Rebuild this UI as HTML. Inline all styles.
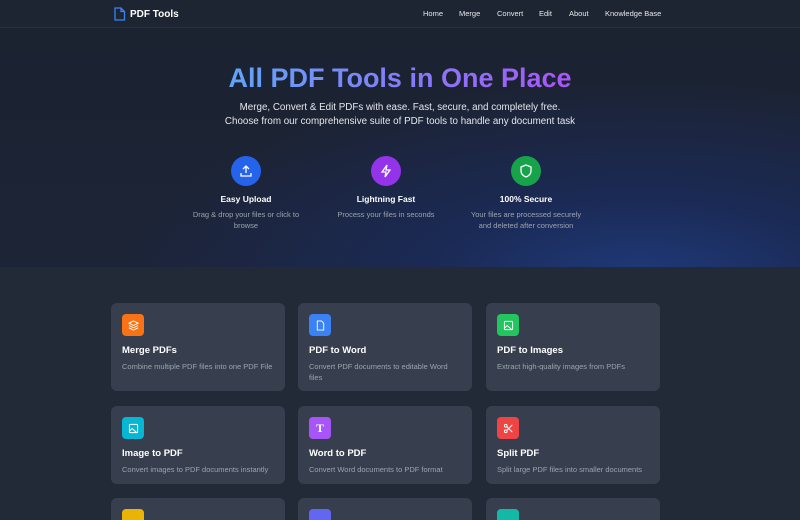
<!DOCTYPE html>
<html><head><meta charset="utf-8"><style>
*{margin:0;padding:0;box-sizing:border-box}
html,body{width:800px;height:520px;overflow:hidden}
body{background:#222a38;font-family:"Liberation Sans",sans-serif;color:#fff;position:relative}
nav{height:28px;background:#1e2532;border-bottom:1px solid #2a3242;position:relative}
.logo{position:absolute;left:113px;top:7px;display:flex;align-items:center;gap:4px;font-weight:bold;font-size:10px}
.links{position:absolute;top:9px;left:423px;font-size:7.5px;color:#e5e7eb}
.links span{position:absolute;white-space:nowrap}
.hero{height:239px;background:radial-gradient(ellipse 520px 200px at 640px 250px,#1e3a7a 0%,#1b2a55 40%,transparent 100%),linear-gradient(180deg,#1b2230,#1c2437);position:relative;text-align:center}
h1{position:absolute;top:35px;left:0;right:0;font-size:27px;font-weight:bold;background:linear-gradient(90deg,#60a5fa,#a855f7);-webkit-background-clip:text;color:transparent;width:max-content;margin:0 auto;white-space:nowrap;padding:0 2px}
.sub{position:absolute;top:73px;left:0;right:0;font-size:9.8px;line-height:14px;color:#e5e7eb}
.f{position:absolute;top:128px;width:150px;text-align:center}
.c{width:30px;height:30px;border-radius:50%;margin:0 auto;display:flex;align-items:center;justify-content:center}
.f b{display:block;font-size:8.5px;margin-top:8px}
.f p{font-size:7.5px;color:#9ca3af;line-height:11px;margin-top:5px}
.card{position:absolute;width:174px;background:#373f4e;border-radius:6px;padding:11px}
.ic{width:22px;height:22px;border-radius:4px;display:flex;align-items:center;justify-content:center}
.card b{display:block;font-size:9.5px;margin-top:9px}
.card p{font-size:7.5px;color:#9ca3af;line-height:11px;margin-top:5px;white-space:nowrap}
</style></head><body>
<nav>
<div class="logo"><svg width="13" height="14" viewBox="0 0 13 14"><path d="M2 1h6l3.5 3.5V13H2z M8 1v3.5h3.5" fill="none" stroke="#3b82f6" stroke-width="1.3"/></svg>PDF Tools</div>
<div class="links"><span style="left:0">Home</span><span style="left:36px">Merge</span><span style="left:74px">Convert</span><span style="left:116px">Edit</span><span style="left:146px">About</span><span style="left:182px">Knowledge Base</span></div>
</nav>
<div class="hero">
<h1>All PDF Tools in One Place</h1>
<div class="sub">Merge, Convert &amp; Edit PDFs with ease. Fast, secure, and completely free.<br>Choose from our comprehensive suite of PDF tools to handle any document task</div>
<div class="f" style="left:171px"><div class="c" style="background:#2563eb"><svg width="14" height="14" viewBox="0 0 14 14" fill="none" stroke="#fff" stroke-width="1.3"><path d="M2 9v3h10V9M7 9V2M4 5l3-3 3 3"/></svg></div><b>Easy Upload</b><p>Drag &amp; drop your files or click to<br>browse</p></div>
<div class="f" style="left:311px"><div class="c" style="background:#9333ea"><svg width="14" height="14" viewBox="0 0 14 14" fill="none" stroke="#fff" stroke-width="1.3"><path d="M8 1L3 8h4l-1 5 5-7H7z"/></svg></div><b>Lightning Fast</b><p>Process your files in seconds</p></div>
<div class="f" style="left:451px"><div class="c" style="background:#16a34a"><svg width="14" height="14" viewBox="0 0 14 14" fill="none" stroke="#fff" stroke-width="1.3"><path d="M7 1l5 2v4c0 3-2.5 5-5 6-2.5-1-5-3-5-6V3z"/></svg></div><b>100% Secure</b><p>Your files are processed securely<br>and deleted after conversion</p></div>
</div>
<div class="card" style="left:111px;top:303px;height:88px"><div class="ic" style="background:#f97316"><svg width="11" height="11" viewBox="0 0 12 12" fill="none" stroke="#fff"><path d="M6 1l5 2.5-5 2.5-5-2.5zM1 6l5 2.5 5-2.5M1 8.5l5 2.5 5-2.5"/></svg></div><b>Merge PDFs</b><p>Combine multiple PDF files into one PDF File</p></div>
<div class="card" style="left:298px;top:303px;height:88px"><div class="ic" style="background:#3b82f6"><svg width="11" height="11" viewBox="0 0 12 12" fill="none" stroke="#fff"><path d="M2.5 1h4.5l2.5 2.5V11h-7z"/></svg></div><b>PDF to Word</b><p>Convert PDF documents to editable Word<br>files</p></div>
<div class="card" style="left:486px;top:303px;height:88px"><div class="ic" style="background:#22c55e"><svg width="11" height="11" viewBox="0 0 12 12" fill="none" stroke="#fff"><rect x="1.5" y="1.5" width="9" height="9" rx="1"/><path d="M1.5 9l3-3 5 4.5"/></svg></div><b>PDF to Images</b><p>Extract high-quality images from PDFs</p></div>
<div class="card" style="left:111px;top:406px;height:78px"><div class="ic" style="background:#06b6d4"><svg width="11" height="11" viewBox="0 0 12 12" fill="none" stroke="#fff"><rect x="1.5" y="1.5" width="9" height="9" rx="1"/><path d="M1.5 9l3-3 5 4.5"/></svg></div><b>Image to PDF</b><p>Convert images to PDF documents instantly</p></div>
<div class="card" style="left:298px;top:406px;height:78px"><div class="ic" style="background:#a855f7;font:bold 12px 'Liberation Serif',serif">T</div><b>Word to PDF</b><p>Convert Word documents to PDF format</p></div>
<div class="card" style="left:486px;top:406px;height:78px"><div class="ic" style="background:#ef4444"><svg width="11" height="11" viewBox="0 0 12 12" fill="none" stroke="#fff"><circle cx="3" cy="3" r="1.5"/><circle cx="3" cy="9" r="1.5"/><path d="M4.2 4l6 6M4.2 8l6-6"/></svg></div><b>Split PDF</b><p>Split large PDF files into smaller documents</p></div>
<div class="card" style="left:111px;top:498px;height:22px;border-radius:6px 6px 0 0"><div class="ic" style="background:#eab308"></div></div>
<div class="card" style="left:298px;top:498px;height:22px;border-radius:6px 6px 0 0"><div class="ic" style="background:#6366f1"></div></div>
<div class="card" style="left:486px;top:498px;height:22px;border-radius:6px 6px 0 0"><div class="ic" style="background:#14b8a6"></div></div>
</body></html>
